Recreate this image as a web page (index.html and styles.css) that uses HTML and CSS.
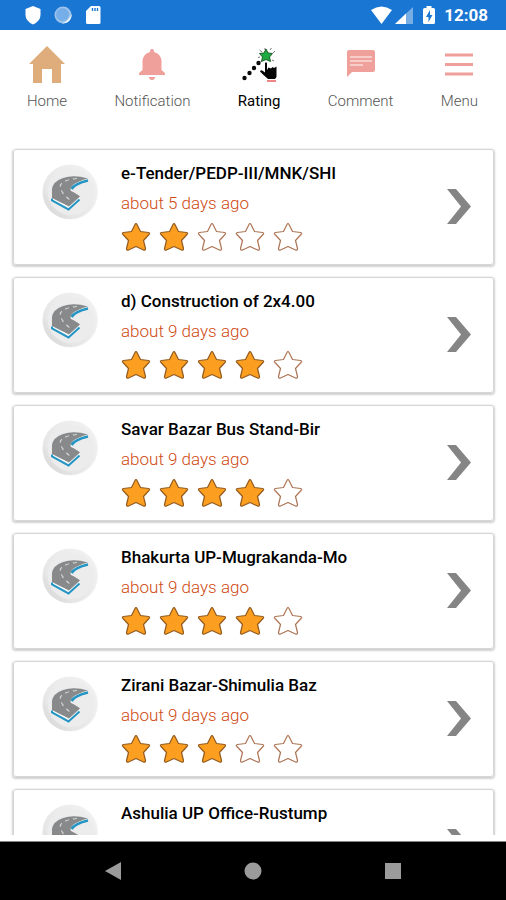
FILE: index.html
```html
<!DOCTYPE html>
<html lang="en">
<head>
<meta charset="utf-8">
<meta name="viewport" content="width=device-width, initial-scale=1">
<title>Rating</title>
<link rel="stylesheet" href="styles.css">
</head>
<body>
<svg class="sprite" aria-hidden="true">
  <defs>
    <linearGradient id="disc" x1="0" y1="1" x2="1" y2="0">
      <stop offset="0" stop-color="#cfd0d1"/>
      <stop offset=".3" stop-color="#e6e6e7"/>
      <stop offset="1" stop-color="#f3f3f4"/>
    </linearGradient>
  </defs>
  <symbol id="star" viewBox="0 0 30 30"><path d="M14 2.500Q15 .5 16 2.500L19.500 9.500 27.500 10.500Q29.500 11 28 12.500L22.500 18.500 24.500 26.500Q24.500 28.800 22.500 28L15 24.500 7.500 28Q5.500 28.800 5.500 26.500L7.500 18.500 2 12.500Q.5 11 2.500 10.500L10.500 9.500Z" stroke-width="1.200" stroke-linejoin="round"/></symbol>
  <symbol id="chevron" viewBox="0 0 24 35"><path d="M0 0H9L24 17.500 9 35H0L14 17.500Z" fill="#858585"/></symbol>
  <symbol id="road" viewBox="0 0 56 56">
    <circle cx="28.500" cy="28" r="27.500" fill="#f1f1f2"/>
    <circle cx="27.500" cy="28" r="27" fill="url(#disc)"/>
    <circle cx="29" cy="27.500" r="23.500" fill="#ececed"/>
    <path d="M10 31V36L26.500 45 38 35V31Z" fill="#fafafa"/>
    <path d="M10 34.500V36.500L26.500 45.500 37.500 35.500" fill="none" stroke="#2396c4" stroke-width="2"/>
    <path d="M29.500 25Q33 19.500 46 16.500" fill="none" stroke="#2396c4" stroke-width="2.500"/>
    <path d="M46 14.500Q32 10.500 21 14Q11 17.500 10 25V34L27 42.500 38 32.500Q37 31 29 27Q27.500 25 30 22Q34 17.500 46 14.500Z" fill="#88898a"/>
    <path d="M35 14.500Q22 15.500 18.500 21Q17 27 28 36" fill="none" stroke="#d5d5d5" stroke-width="1.200" stroke-dasharray="4 4"/>
  </symbol>
</svg>

<header class="status">
  <div class="status-group">
    <svg width="16" height="20" viewBox="0 0 16 20" aria-hidden="true"><path d="M8 1 15.500 4V10Q15.500 16 8 19.500Q.500 16 .500 10V4Z" fill="#fff"/></svg>
    <svg width="18" height="20" viewBox="0 0 18 20" aria-hidden="true"><circle cx="9" cy="10" r="8.500" fill="#9cc3eb"/><circle cx="8.500" cy="9.500" r="6.500" fill="#75aee8"/><path d="M17.500 9A8.500 8.500 0 0 1 8 18.500Q15 16 17.500 9Z" fill="#f3f8fd"/></svg>
    <svg width="16" height="20" viewBox="0 0 16 20" aria-hidden="true"><path d="M6 1H14Q15.500 1 15.500 2.500V17.500Q15.500 19 14 19H2.500Q1 19 1 17.500V6Z" fill="#fff"/><path d="M7.500 3V6M10 3V6M12.500 3V6" stroke="#1976d2" stroke-width="1.400"/></svg>
  </div>
  <div class="status-group status-right">
    <svg width="21" height="20" viewBox="0 0 21 20" aria-hidden="true"><path d="M0 5Q10.500-2 21 5L10.500 19Z" fill="#fff"/></svg>
    <svg width="18" height="20" viewBox="0 0 18 20" aria-hidden="true"><path d="M18 2V19H0Z" fill="#76ade5"/><path d="M11 8.500V19H0Z" fill="#fff"/></svg>
    <svg class="battery" width="12" height="20" viewBox="0 0 12 20" aria-hidden="true"><path d="M3.500 1H8.500V3H10.500Q12 3 12 4.500V17.500Q12 19 10.500 19H1.500Q0 19 0 17.500V4.500Q0 3 1.500 3H3.500Z" fill="#fff"/><path d="M7 5 3 12H5.500V17L9.500 10H7Z" fill="#1976d2"/></svg>
    <time class="clock">12:08</time>
  </div>
</header>

<nav class="tabs" aria-label="Main">
  <a class="tab" href="#home">
    <svg width="36" height="38" viewBox="0 0 36 38" aria-hidden="true"><path d="M18 0 36 18H32V37H23V23H13V37H4V18H0Z" fill="#dfac7b"/></svg>
    <span>Home</span>
  </a>
  <a class="tab" href="#notification">
    <svg width="26" height="38" viewBox="0 0 26 38" aria-hidden="true"><path d="M11 5Q11 3 13 3T15 5V6Q22 8 22.500 15V24L26 27V29H0V27L3.500 24V15Q4 8 11 6Z" fill="#efa09a"/><path d="M10 31H16Q16 34 13 34T10 31Z" fill="#efa09a"/></svg>
    <span>Notification</span>
  </a>
  <a class="tab active" href="#rating" aria-current="page">
    <svg width="36" height="38" viewBox="0 0 36 38" aria-hidden="true">
      <g fill="#0b0b0b"><circle cx="3.500" cy="32" r="2.200"/><circle cx="8.500" cy="27" r="2.200"/><circle cx="13" cy="22" r="2.200"/><circle cx="17.500" cy="17" r="2.200"/></g>
      <path d="M18.500 4 21 6M30.500 2 29 4M19 11 17 11.500M32 7 34 5M20.500 15 19.500 16.500M31 14 33 15M24 2 24 4" stroke="#777" stroke-width="1"/>
      <path d="M25 3 27 7 31.500 7.500 28.500 11 29.500 15.500 25 13.500 20.500 15.500 21.500 11 18.500 7.500 23 7Z" fill="#1daa41" stroke="#215f2a" stroke-width="1"/>
      <path d="M24 17Q25 15.500 26 17V24L27.500 21.500 30 22.500 31.500 21 33 22 35.500 20.500V31L34 33H27L22.500 29 19 25.500Q20 23.500 22 25L24 26.500Z" fill="#050505"/>
      <path d="M26 35H35" stroke="#ef8585" stroke-width="2"/>
    </svg>
    <span>Rating</span>
  </a>
  <a class="tab" href="#comment">
    <svg width="28" height="38" viewBox="0 0 28 38" aria-hidden="true"><path d="M2 4H26Q28 4 28 6V24Q28 26 26 26H5L0 31V6Q0 4 2 4Z" fill="#efa09a"/><path d="M3 11H25M3 15H25M3 19H16" stroke="#f9dcd9" stroke-width="1.500"/></svg>
    <span>Comment</span>
  </a>
  <a class="tab" href="#menu">
    <svg width="28" height="38" viewBox="0 0 28 38" aria-hidden="true"><path d="M0 9H28M0 18.500H28M0 28H28" stroke="#efa09a" stroke-width="3"/></svg>
    <span>Menu</span>
  </a>
</nav>

<main class="ratings">
  <a class="card" href="#r1">
    <svg class="road" aria-hidden="true"><use href="#road"/></svg>
    <div class="info">
      <h2>e-Tender/PEDP-III/MNK/SHI</h2>
      <p>about 5 days ago</p>
      <div class="stars" role="img" aria-label="2 of 5 stars"><svg class="on"><use href="#star"/></svg><svg class="on"><use href="#star"/></svg><svg><use href="#star"/></svg><svg><use href="#star"/></svg><svg><use href="#star"/></svg></div>
    </div>
    <svg class="chevron" aria-hidden="true"><use href="#chevron"/></svg>
  </a>
  <a class="card" href="#r2">
    <svg class="road" aria-hidden="true"><use href="#road"/></svg>
    <div class="info">
      <h2>d) Construction of 2x4.00</h2>
      <p>about 9 days ago</p>
      <div class="stars" role="img" aria-label="4 of 5 stars"><svg class="on"><use href="#star"/></svg><svg class="on"><use href="#star"/></svg><svg class="on"><use href="#star"/></svg><svg class="on"><use href="#star"/></svg><svg><use href="#star"/></svg></div>
    </div>
    <svg class="chevron" aria-hidden="true"><use href="#chevron"/></svg>
  </a>
  <a class="card" href="#r3">
    <svg class="road" aria-hidden="true"><use href="#road"/></svg>
    <div class="info">
      <h2>Savar Bazar Bus Stand-Bir</h2>
      <p>about 9 days ago</p>
      <div class="stars" role="img" aria-label="4 of 5 stars"><svg class="on"><use href="#star"/></svg><svg class="on"><use href="#star"/></svg><svg class="on"><use href="#star"/></svg><svg class="on"><use href="#star"/></svg><svg><use href="#star"/></svg></div>
    </div>
    <svg class="chevron" aria-hidden="true"><use href="#chevron"/></svg>
  </a>
  <a class="card" href="#r4">
    <svg class="road" aria-hidden="true"><use href="#road"/></svg>
    <div class="info">
      <h2>Bhakurta UP-Mugrakanda-Mo</h2>
      <p>about 9 days ago</p>
      <div class="stars" role="img" aria-label="4 of 5 stars"><svg class="on"><use href="#star"/></svg><svg class="on"><use href="#star"/></svg><svg class="on"><use href="#star"/></svg><svg class="on"><use href="#star"/></svg><svg><use href="#star"/></svg></div>
    </div>
    <svg class="chevron" aria-hidden="true"><use href="#chevron"/></svg>
  </a>
  <a class="card" href="#r5">
    <svg class="road" aria-hidden="true"><use href="#road"/></svg>
    <div class="info">
      <h2>Zirani Bazar-Shimulia Baz</h2>
      <p>about 9 days ago</p>
      <div class="stars" role="img" aria-label="3 of 5 stars"><svg class="on"><use href="#star"/></svg><svg class="on"><use href="#star"/></svg><svg class="on"><use href="#star"/></svg><svg><use href="#star"/></svg><svg><use href="#star"/></svg></div>
    </div>
    <svg class="chevron" aria-hidden="true"><use href="#chevron"/></svg>
  </a>
  <a class="card" href="#r6">
    <svg class="road" aria-hidden="true"><use href="#road"/></svg>
    <div class="info">
      <h2>Ashulia UP Office-Rustump</h2>
    </div>
    <svg class="chevron" aria-hidden="true"><use href="#chevron"/></svg>
  </a>
</main>

<footer class="system">
  <button type="button" aria-label="Back"><svg width="18" height="18" viewBox="0 0 18 18"><path d="M17 0V18L1 9Z" fill="#9b9b9b"/></svg></button>
  <button type="button" aria-label="Home"><svg width="18" height="18" viewBox="0 0 18 18"><circle cx="9" cy="9" r="8.500" fill="#9b9b9b"/></svg></button>
  <button type="button" aria-label="Recent apps"><svg width="18" height="18" viewBox="0 0 18 18"><rect x="1" y="1" width="16" height="16" fill="#9b9b9b"/></svg></button>
</footer>
</body>
</html>
```
FILE: styles.css
```css
* {
  box-sizing: border-box;
}

body {
  margin: 0;
  height: 100vh;
  display: flex;
  flex-direction: column;
  overflow: hidden;
  background: #fff;
  font-family: Roboto, "Liberation Sans", sans-serif;
}

svg {
  display: block;
  flex: none;
}

a {
  color: inherit;
  text-decoration: none;
}

.sprite {
  position: absolute;
  width: 0;
  height: 0;
}

.status {
  flex: none;
  height: 30px;
  padding: 0 18px 0 25px;
  display: flex;
  align-items: center;
  justify-content: space-between;
  background: #1976d2;
  color: #fff;
}

.status-group {
  display: flex;
  align-items: center;
  gap: 13px;
}

.status-right {
  gap: 3px;
}

.battery {
  margin: 0 6px 0 7px;
}

.clock {
  font-size: 17px;
  line-height: 24px;
  font-weight: 700;
}

.tabs {
  flex: none;
  padding: 16px 28px 0 27px;
  display: flex;
  justify-content: space-between;
}

.tab {
  display: flex;
  flex-direction: column;
  align-items: center;
  gap: 8px;
  font-size: 15px;
  line-height: 18px;
  font-weight: 300;
  color: #555;
}

.active {
  color: #000;
  font-weight: 400;
}

.ratings {
  flex: 1;
  min-height: 0;
  margin: 35px 0 6px;
  padding: 4px 12px 4px 13px;
  display: flex;
  flex-direction: column;
  gap: 12px;
  overflow: hidden;
}

.card {
  flex: none;
  min-height: 116px;
  padding: 12px 22px 10px 28px;
  display: flex;
  align-items: flex-start;
  border: 1px solid #d6d6d6;
  border-radius: 3px;
  box-shadow: 0 1px 2px 1px #d0d0d0;
}

.road {
  width: 56px;
  height: 56px;
  margin: 2px 23px 0 0;
}

.info {
  flex: 1;
}

h2,
p {
  margin: 0;
  font-size: 17px;
  line-height: 22px;
}

h2 {
  font-weight: 500;
  color: #000;
}

p {
  margin: 8px 0;
  font-weight: 300;
  color: #cf4a12;
}

.stars {
  display: flex;
  gap: 8px;
}

.stars svg {
  width: 30px;
  height: 30px;
  fill: #fff;
  stroke: #ad7455;
}

.stars .on {
  fill: #fc9f20;
  stroke: #935b20;
}

.chevron {
  width: 24px;
  height: 35px;
  margin-top: 27px;
}

.system {
  flex: none;
  height: 59px;
  padding: 0 104px;
  display: flex;
  align-items: center;
  justify-content: space-between;
  background: #000;
  border-top: 1px solid #858585;
}

.system button {
  padding: 0;
  border: 0;
  background: none;
}
```
